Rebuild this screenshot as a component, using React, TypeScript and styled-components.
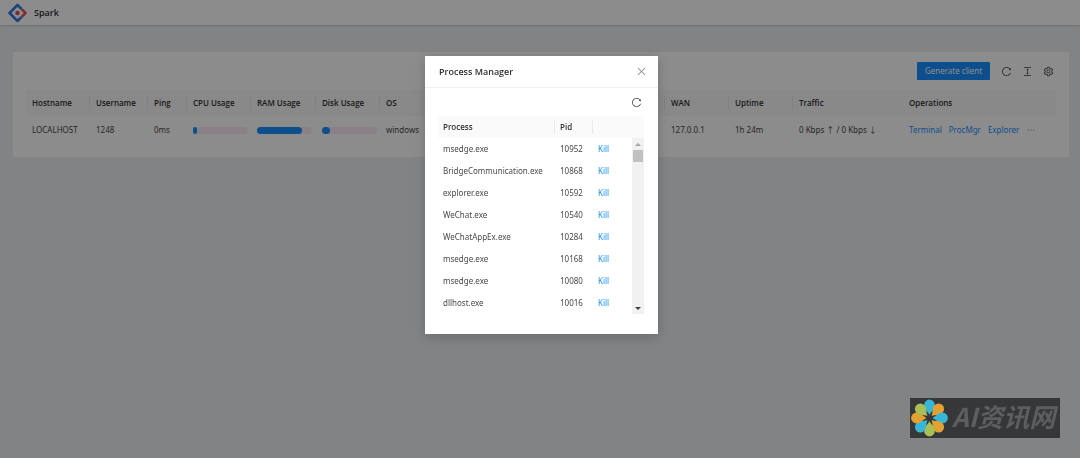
import React from "react";
import styled, { createGlobalStyle } from "styled-components";
import {
  AiOutlineClose,
  AiOutlineColumnHeight,
  AiOutlineEllipsis,
  AiOutlineReload,
  AiOutlineSetting,
} from "react-icons/ai";

const headingFont = `"Open Sans", "Noto Sans", sans-serif`;

const GlobalStyle = createGlobalStyle`
  * { box-sizing: border-box; }
  body {
    margin: 0;
    background: #ebeef2;
    color: #303030;
    font-family: "Noto Sans", "Open Sans", "Noto Sans CJK SC", sans-serif;
    font-size: 8px;
    line-height: 12px;
  }
  button { font: inherit; color: inherit; }
`;

const Header = styled.header`
  display: flex;
  align-items: center;
  gap: 7px;
  height: 25px;
  padding: 0 8px;
  background: #fff;
  box-shadow: 0 1px 2px rgba(0, 21, 41, 0.16);
`;

const Brand = styled.h1`
  margin: 0;
  font-family: ${headingFont};
  font-size: 9px;
  font-weight: 600;
`;

const Card = styled.section`
  margin: 27px 11px 0 13px;
  padding: 0 13px 13px;
  background: #fff;
`;

const Toolbar = styled.div`
  display: flex;
  align-items: center;
  justify-content: flex-end;
  gap: 10px;
  height: 38px;
  padding-right: 2px;
`;

const PrimaryButton = styled.button`
  height: 18px;
  width: 73px;
  margin-right: 1px;
  padding: 0;
  border: 0;
  border-radius: 1px;
  background: #1890ff;
  color: #fff;
  cursor: pointer;
`;

const IconButton = styled.button<{ $muted?: boolean }>`
  display: flex;
  padding: 0;
  border: 0;
  background: none;
  color: ${(p) => (p.$muted ? "#8c8c8c" : "#404040")};
  font-size: 11px;
  cursor: pointer;
`;

const Table = styled.table`
  width: 100%;
  table-layout: fixed;
  border-collapse: collapse;
  text-align: left;
  white-space: nowrap;
`;

const Col = styled.col<{ $width?: number }>`
  width: ${(p) => (p.$width ? `${p.$width}px` : "auto")};
`;

const Th = styled.th<{ $divider?: boolean; $short?: boolean }>`
  height: ${(p) => (p.$short ? 22 : 26)}px;
  padding: 0 0 0 ${(p) => (p.$short ? 5 : 6)}px;
  background: ${(p) =>
      p.$divider
        ? "linear-gradient(#ebebeb, #ebebeb) right center / 1px 14px no-repeat,"
        : ""}
    #fafafa;
  font-family: ${headingFont};
  font-weight: 600;
`;

const Td = styled.td<{ $short?: boolean }>`
  height: ${(p) => (p.$short ? 22 : 28)}px;
  padding: 0 0 0 ${(p) => (p.$short ? 5 : 6)}px;
  color: #484848;
`;

const Track = styled.div`
  width: 55px;
  height: 7px;
  border-radius: 4px;
  background: #ffe9f7;
`;

const Fill = styled.div`
  height: 7px;
  border-radius: 4px;
  background: #1890ff;
`;

const Actions = styled.div`
  display: flex;
  align-items: center;
  gap: 7px;
`;

const Link = styled.a`
  display: inline-flex;
  color: #1890ff;
  text-decoration: none;
`;

const MoreLink = styled(Link)`
  font-size: 10px;
  stroke: currentColor;
  stroke-width: 40px;
`;

const Mask = styled.div`
  position: fixed;
  inset: 0;
  display: flex;
  align-items: flex-start;
  justify-content: center;
  padding: 56px 0 0 3px;
  background: rgba(0, 0, 0, 0.45);
`;

const Dialog = styled.div`
  width: 233px;
  background: #fff;
  box-shadow: 0 3px 12px rgba(0, 0, 0, 0.2);
`;

const DialogHeader = styled.div`
  display: flex;
  align-items: center;
  justify-content: space-between;
  height: 32px;
  padding: 0 11px 0 14px;
  border-bottom: 1px solid #f0f0f0;
`;

const DialogTitle = styled.h2`
  margin: 0;
  font-family: ${headingFont};
  font-size: 9px;
  font-weight: 600;
`;

const DialogBody = styled.div`
  padding: 0 14px 20px 13px;
`;

const DialogTools = styled.div`
  display: flex;
  align-items: center;
  justify-content: flex-end;
  height: 28px;
  padding-right: 2px;
`;

const ScrollArea = styled.div`
  display: flex;
`;

const Scrollbar = styled.div`
  display: flex;
  flex: none;
  flex-direction: column;
  align-items: center;
  width: 12px;
  background: #f1f1f1;
`;

const Arrow = styled.span<{ $down?: boolean }>`
  display: flex;
  align-items: center;
  justify-content: center;
  height: 12px;
  margin-top: ${(p) => (p.$down ? "auto" : "0")};

  &::before {
    content: "";
    border: 3px solid transparent;
    ${(p) =>
      p.$down
        ? "border-top-color: #404040; border-bottom-width: 0;"
        : "border-bottom-color: #a3a3a3; border-top-width: 0;"}
  }
`;

const Thumb = styled.span`
  width: 10px;
  height: 12px;
  background: #c1c1c1;
`;

const Watermark = styled.div`
  position: fixed;
  right: 20px;
  bottom: 20px;
  display: flex;
  align-items: center;
  gap: 3px;
  width: 150px;
  height: 40px;
  background: #353738;
  color: #5c5e60;
  font-family: "Noto Sans CJK SC", sans-serif;
  font-size: 26px;
  font-style: italic;
  font-weight: 700;
  line-height: 36px;
  white-space: nowrap;
`;

const WatermarkText = styled.span`
  padding-bottom: 5px;
`;

function Logo() {
  return (
    <svg width="19" height="20" viewBox="0 0 38 40" fill="none" strokeWidth="5" aria-hidden="true">
      <path d="M26 11 19 4 3 20 19 36 26 29" stroke="#2f7fe6" strokeLinejoin="round" strokeLinecap="round" />
      <path d="M29 14 35 20 29 26" stroke="#e0525a" strokeLinejoin="round" strokeLinecap="round" />
      <circle cx="19" cy="20" r="4.5" fill="#e0525a" />
    </svg>
  );
}

const petals = ["#38b6d8", "#e3a134", "#38b6d8", "#e3a134", "#a9be55", "#38b6d8", "#e3a134", "#a9be55"];

function Flower() {
  return (
    <svg width="39" height="38" viewBox="-19.5 -19 39 38" aria-hidden="true">
      {petals.map((color, i) => (
        <path
          key={i}
          d="M0-3C-2-7-5.400-9-5.400-13A5.400 5.400 0 0 1 5.400-13C5.400-9 2-7 0-3Z"
          fill={color}
          transform={`rotate(${i * 45})`}
        />
      ))}
    </svg>
  );
}

const columns: { title: string; width?: number }[] = [
  { title: "Hostname", width: 64 },
  { title: "Username", width: 58 },
  { title: "Ping", width: 39 },
  { title: "CPU Usage", width: 64 },
  { title: "RAM Usage", width: 65 },
  { title: "Disk Usage", width: 64 },
  { title: "OS" },
  { title: "WAN", width: 64 },
  { title: "Uptime", width: 64 },
  { title: "Traffic", width: 110 },
  { title: "Operations", width: 153 },
];

const processes: [string, number][] = [
  ["msedge.exe", 10952],
  ["BridgeCommunication.exe", 10868],
  ["explorer.exe", 10592],
  ["WeChat.exe", 10540],
  ["WeChatAppEx.exe", 10284],
  ["msedge.exe", 10168],
  ["msedge.exe", 10080],
  ["dllhost.exe", 10016],
];

function Usage({ percent }: { percent: number }) {
  return (
    <Track>
      <Fill style={{ width: `${percent}%` }} />
    </Track>
  );
}

function ProcessManager() {
  return (
    <Dialog role="dialog" aria-labelledby="process-title">
      <DialogHeader>
        <DialogTitle id="process-title">Process Manager</DialogTitle>
        <IconButton $muted aria-label="Close"><AiOutlineClose /></IconButton>
      </DialogHeader>
      <DialogBody>
        <DialogTools>
          <IconButton aria-label="Reload processes"><AiOutlineReload /></IconButton>
        </DialogTools>
        <Table>
          <colgroup>
            <Col />
            <Col $width={38} />
            <Col $width={51} />
          </colgroup>
          <thead>
            <tr>
              <Th $short $divider>Process</Th>
              <Th $short $divider>Pid</Th>
              <Th $short aria-label="Action" />
            </tr>
          </thead>
        </Table>
        <ScrollArea>
          <Table>
            <colgroup>
              <Col />
              <Col $width={38} />
              <Col $width={39} />
            </colgroup>
            <tbody>
              {processes.map(([name, pid]) => (
                <tr key={pid}>
                  <Td $short>{name}</Td>
                  <Td $short>{pid}</Td>
                  <Td $short><Link href="#kill">Kill</Link></Td>
                </tr>
              ))}
            </tbody>
          </Table>
          <Scrollbar aria-hidden="true">
            <Arrow />
            <Thumb />
            <Arrow $down />
          </Scrollbar>
        </ScrollArea>
      </DialogBody>
    </Dialog>
  );
}

export default function App() {
  return (
    <>
      <GlobalStyle />
      <Header>
        <Logo />
        <Brand>Spark</Brand>
      </Header>
      <main>
        <Card>
          <Toolbar>
            <PrimaryButton>Generate client</PrimaryButton>
            <IconButton aria-label="Reload"><AiOutlineReload /></IconButton>
            <IconButton aria-label="Density"><AiOutlineColumnHeight /></IconButton>
            <IconButton aria-label="Settings"><AiOutlineSetting /></IconButton>
          </Toolbar>
          <Table>
            <colgroup>
              {columns.map((c) => <Col key={c.title} $width={c.width} />)}
            </colgroup>
            <thead>
              <tr>
                {columns.map((c, i) => (
                  <Th key={c.title} $divider={i < columns.length - 2}>{c.title}</Th>
                ))}
              </tr>
            </thead>
            <tbody>
              <tr>
                <Td>LOCALHOST</Td>
                <Td>1248</Td>
                <Td>0ms</Td>
                <Td><Usage percent={7} /></Td>
                <Td><Usage percent={82} /></Td>
                <Td><Usage percent={14} /></Td>
                <Td>windows</Td>
                <Td>127.0.0.1</Td>
                <Td>1h 24m</Td>
                <Td>0 Kbps ↑ / 0 Kbps ↓</Td>
                <Td>
                  <Actions>
                    <Link href="#terminal">Terminal</Link>
                    <Link href="#procmgr">ProcMgr</Link>
                    <Link href="#explorer">Explorer</Link>
                    <MoreLink href="#more" aria-label="More"><AiOutlineEllipsis /></MoreLink>
                  </Actions>
                </Td>
              </tr>
            </tbody>
          </Table>
        </Card>
      </main>
      <Mask>
        <ProcessManager />
      </Mask>
      <Watermark>
        <Flower />
        <WatermarkText>AI资讯网</WatermarkText>
      </Watermark>
    </>
  );
}
